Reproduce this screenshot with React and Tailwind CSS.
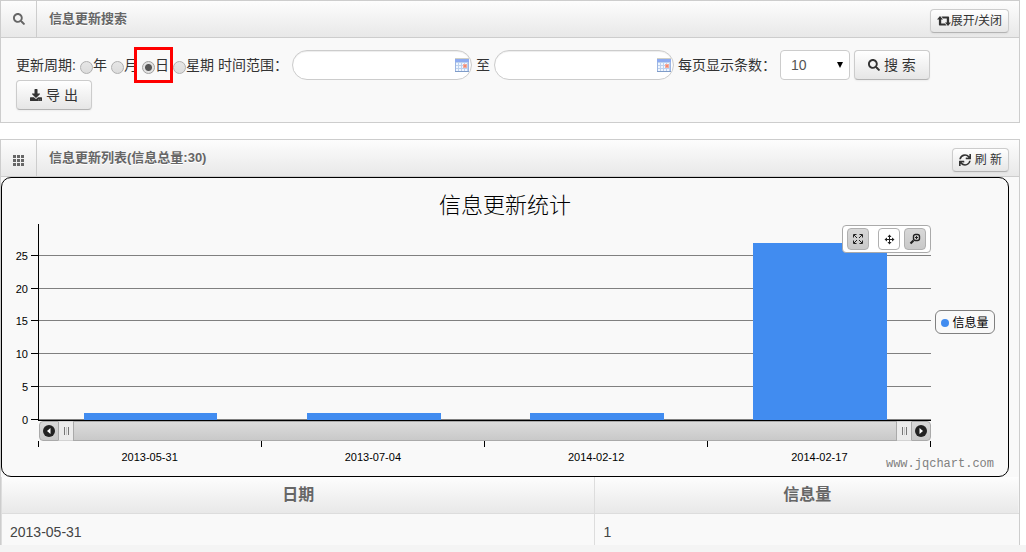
import React from "react";
import { FaSearch, FaDownload, FaSync } from "react-icons/fa";

const BUTTON =
  "flex items-center justify-center rounded border border-[#cccccc] border-b-[#b3b3b3] bg-linear-to-b from-white to-[#e6e6e6] text-[#333333] shadow-[0_1px_2px_rgba(0,0,0,0.05)]";

const DATA = [
  { date: "2013-05-31", count: 1 },
  { date: "2013-07-04", count: 1 },
  { date: "2014-02-12", count: 1 },
  { date: "2014-02-17", count: 27 },
];

const TICKS = [
  { value: 25, y: 31 },
  { value: 20, y: 64 },
  { value: 15, y: 96 },
  { value: 10, y: 129 },
  { value: 5, y: 162 },
  { value: 0, y: 195 },
];

const barHeight = (count) => Math.round(count * 6.55);

function PanelHeader({ icon, title, children }) {
  return (
    <header className="flex h-[37px] items-center border-b border-[#cdcdcd] bg-linear-to-b from-[#fdfdfd] to-[#e8e8e8] pr-2.5">
      <span className="flex w-9 items-center justify-center self-stretch border-r border-[#cdcdcd] text-xs text-[#666666]">
        {icon}
      </span>
      <h2 className="flex-1 pl-3 text-[13px] leading-5 font-bold text-[#666666] [text-shadow:0_1px_0_#ffffff]">
        {title}
      </h2>
      {children}
    </header>
  );
}

function GridIcon() {
  return (
    <svg viewBox="0 0 11 11" className="mt-1 size-[11px]" fill="currentColor" shapeRendering="crispEdges">
      {[0, 4, 8].map((y) =>
        [0, 4, 8].map((x) => <rect key={`${x}-${y}`} x={x} y={y} width="3" height="3" />)
      )}
    </svg>
  );
}

function RetweetIcon() {
  return (
    <svg viewBox="0 0 14 10" className="h-2.5 w-3.5" fill="currentColor">
      <path d="M3 0l3 3.500H4.200V7.500H8l1.600 2H2.600c-.4 0-.7-.3-.7-.7V3.500H0z" />
      <path d="M11 10L8 6.500h1.800V2.500H6L4.400.5h7c.4 0 .7.3.7.7v5.300H14z" />
    </svg>
  );
}

function Period({ label, checked, marked }) {
  return (
    <label className="relative flex items-center">
      <input
        type="radio"
        name="period"
        defaultChecked={checked}
        className="mt-1 size-[13px] appearance-none rounded-full border border-[#b0b0b0] bg-linear-to-b from-[#e6e6e6] to-[#dcdcdc] checked:border-[#a0a0a0] checked:bg-[radial-gradient(circle,#555555_3px,#e2e2e2_4px)]"
      />
      {label}
      {marked && (
        <span className="pointer-events-none absolute -inset-x-2 -inset-y-2 -right-1 border-3 border-[#ff0000]" />
      )}
    </label>
  );
}

function CalendarIcon() {
  return (
    <svg viewBox="0 0 14 14" className="size-3.5">
      <rect x="0" y="1" width="14" height="12" fill="#9db6e2" />
      <rect x="0" y="0" width="14" height="1" fill="#d0d0c6" />
      <rect x="0" y="1" width="14" height="3" fill="#8eabf0" />
      <rect x="0" y="13" width="14" height="1" fill="#7f9cc8" />
      <rect x="1" y="4" width="12" height="9" fill="#bdd2ee" />
      {[5, 8, 11].map((y) =>
        [1, 4, 7, 10].map((x) => (
          <rect key={`${x}-${y}`} x={x} y={y} width="2" height="2" fill="#f0f6ff" />
        ))
      )}
      <rect x="8" y="6" width="4" height="4" fill="#f5ac9c" />
      <rect x="9" y="7" width="2" height="2" fill="#f08a74" />
    </svg>
  );
}

function DateField({ label }) {
  return (
    <span className="relative">
      <input
        type="text"
        aria-label={label}
        className="block h-[30px] w-[180px] rounded-full border border-[#cccccc] bg-white px-3 pr-6 text-sm shadow-[inset_0_1px_1px_rgba(0,0,0,0.075)] outline-none"
      />
      <span className="pointer-events-none absolute top-2 right-[3px]">
        <CalendarIcon />
      </span>
    </span>
  );
}

function ToolButton({ label, plain, children }) {
  return (
    <button
      type="button"
      aria-label={label}
      className={
        "flex size-[22px] items-center justify-center rounded border border-[#b0b0b0] " +
        (plain ? "bg-white" : "bg-linear-to-b from-[#d8d8d8] to-[#c9c9c9]")
      }
    >
      <svg viewBox="0 0 12 12" className="size-3" fill="none" stroke="#222222" strokeWidth="1">
        {children}
      </svg>
    </button>
  );
}

function ScrollArrow({ label, side }) {
  return (
    <button
      type="button"
      aria-label={label}
      className={
        "flex w-5 items-center justify-center border border-[#aaaaaa] bg-linear-to-b from-[#dadada] to-[#c8c8c8] " +
        (side === "left" ? "rounded-l" : "rounded-r")
      }
    >
      <svg viewBox="0 0 12 12" className="size-3 shrink-0">
        <circle cx="6" cy="6" r="6" fill="#222222" />
        <path d={side === "left" ? "M7.5 3v6L4 6z" : "M4.500 3v6L8 6z"} fill="#ffffff" />
      </svg>
    </button>
  );
}

function Grip() {
  return (
    <span className="flex w-3.5 items-center justify-center gap-px border-y border-[#d3d3d3] bg-[#ececec]">
      <i className="h-2 w-px bg-[#777777]" />
      <i className="h-2 w-px bg-[#cccccc]" />
      <i className="h-2 w-px bg-[#777777]" />
    </span>
  );
}

function Chart() {
  return (
    <figure className="relative mr-2.5 h-[300px] rounded-[10px] border border-black bg-[#f9f9f9]">
      <figcaption className="h-[46px] pt-3 text-center text-[22px] leading-8 font-light text-black">
        信息更新统计
      </figcaption>
      <div className="flex gap-1 pr-[13px] pl-9">
        <div className="relative flex-1 text-[11px]">
          <svg className="block h-[197px] w-full overflow-visible" shapeRendering="crispEdges">
            {TICKS.map((t) => (
              <g key={t.value}>
                <rect x="0" y={t.y} width="100%" height="1" fill="#808080" />
                <rect x="-7" y={t.y} width="7" height="1" fill="#000000" />
                <text x="-10" y={t.y + 5} textAnchor="end" fill="#000000">
                  {t.value}
                </text>
              </g>
            ))}
            {DATA.map((d, i) => (
              <rect
                key={d.date}
                x={`${5.1 + i * 25}%`}
                y={196 - barHeight(d.count)}
                width="15%"
                height={barHeight(d.count)}
                fill="#418cf0"
              />
            ))}
            <rect x="0" y="0" width="1" height="197" fill="#000000" />
            <rect x="0" y="196" width="100%" height="1" fill="#000000" />
          </svg>
          <div className="ml-px flex h-5">
            <ScrollArrow label="向左" side="left" />
            <Grip />
            <span className="flex-1 border border-[#aaaaaa] bg-linear-to-b from-[#dcdcdc] to-[#c9c9c9]" />
            <Grip />
            <ScrollArrow label="向右" side="right" />
          </div>
          <div className="flex h-1.5 border-r border-black">
            {DATA.map((d) => (
              <span key={d.date} className="flex-1 border-l border-black" />
            ))}
          </div>
          <div className="flex pt-0.5 leading-4">
            {DATA.map((d) => (
              <span key={d.date} className="flex-1 text-center text-black">
                {d.date}
              </span>
            ))}
          </div>
          <div className="absolute top-px right-0 flex gap-1 rounded border border-[#aaaaaa] bg-white px-1 py-0.5">
            <span className="pr-[5px]">
              <ToolButton label="全部显示">
                <path d="M1.500 4.500v-3h3M7.500 1.500h3v3M10.500 7.500v3h-3M4.500 10.500h-3v-3M2 2l3 3M10 2L7 5M10 10L7 7M2 10l3-3" />
              </ToolButton>
            </span>
            <ToolButton label="平移" plain>
              <path d="M6.500 2.500v8M2.500 6.500h8" />
              <path
                d="M6.500 1.500L8.500 4h-4zM6.500 11.500L8.500 9h-4zM1.500 6.500L4 4.500v4zM11.500 6.500L9 4.500v4z"
                fill="#222222"
                stroke="none"
              />
            </ToolButton>
            <ToolButton label="缩放">
              <rect x="4.500" y="1.500" width="6" height="6" rx="2" strokeWidth="1.400" />
              <path d="M7.500 3v3M6 4.500h3" />
              <path d="M4.500 7.500L1.500 10.500" strokeWidth="2.200" />
            </ToolButton>
          </div>
        </div>
        <div className="mt-[86px] flex h-6 w-[60px] items-center justify-center gap-[3px] rounded-md border border-[#808080] pt-px text-xs text-black">
          <i className="size-2 rounded-full bg-[#418cf0]" />
          信息量
        </div>
      </div>
      <a
        href="#jqchart"
        className="absolute right-3.5 bottom-1 font-['Liberation_Mono',monospace] text-xs leading-4 text-[#808080]"
      >
        www.jqchart.com
      </a>
    </figure>
  );
}

export default function App() {
  return (
    <div className="min-h-screen bg-[#f4f4f4] font-['Liberation_Sans','Noto_Sans_CJK_SC',sans-serif] text-sm text-[#333333]">
      <main className="flex flex-col gap-4 bg-white pr-1.5">
        <section className="border border-[#cdcdcd] bg-[#f9f9f9]">
          <PanelHeader icon={<FaSearch />} title="信息更新搜索">
            <button type="button" className={`${BUTTON} mt-1 h-6 px-1.5 text-xs`}>
              <RetweetIcon />
              展开/关闭
            </button>
          </PanelHeader>
          <form className="flex flex-wrap items-center gap-x-1 px-[15px] py-3 leading-5">
            <span>更新周期:</span>
            <Period label="年" />
            <Period label="月" />
            <Period label="日" checked marked />
            <Period label="星期" />
            <span>时间范围：</span>
            <DateField label="开始日期" />
            <span>至</span>
            <DateField label="结束日期" />
            <label htmlFor="page-size">每页显示条数：</label>
            <span className="relative">
              <select
                id="page-size"
                defaultValue="10"
                className="block h-[30px] w-[70px] appearance-none rounded border border-[#cccccc] bg-white pl-2.5 text-sm text-[#555555]"
              >
                <option>10</option>
                <option>20</option>
                <option>50</option>
              </select>
              <svg viewBox="0 0 6 6" className="pointer-events-none absolute top-3 right-[7px] size-1.5">
                <path d="M0 0h6L3 6z" fill="#000000" />
              </svg>
            </span>
            <button type="button" className={`${BUTTON} h-[30px] w-[76px] gap-1`}>
              <FaSearch className="size-3" />
              搜 索
            </button>
            <button type="button" className={`${BUTTON} h-[30px] w-[76px] gap-1`}>
              <FaDownload className="size-3" />
              导 出
            </button>
          </form>
        </section>

        <section className="border border-b-0 border-[#cdcdcd] bg-[#f9f9f9]">
          <PanelHeader icon={<GridIcon />} title="信息更新列表(信息总量:30)">
            <button type="button" className={`${BUTTON} mt-1 h-6 gap-1 px-1.5 text-xs`}>
              <FaSync className="size-3" />
              刷 新
            </button>
          </PanelHeader>
          <Chart />
          <table className="w-full table-fixed border-separate border-spacing-0">
            <thead>
              <tr className="h-[37px] bg-linear-to-b from-[#fdfdfd] to-[#e8e8e8] text-base leading-5 text-[#666666]">
                <th className="w-[58.3%] border-b border-l border-[#dddddd]">日期</th>
                <th className="border-b border-l border-[#dddddd]">信息量</th>
              </tr>
            </thead>
            <tbody>
              {DATA.slice(0, 1).map((d) => (
                <tr key={d.date} className="leading-5 text-[#444444]">
                  <td className="border-l border-[#dddddd] px-2 pt-2 pb-[3px]">{d.date}</td>
                  <td className="border-l border-[#dddddd] px-2 pt-2 pb-[3px]">{d.count}</td>
                </tr>
              ))}
            </tbody>
          </table>
        </section>
      </main>
    </div>
  );
}
